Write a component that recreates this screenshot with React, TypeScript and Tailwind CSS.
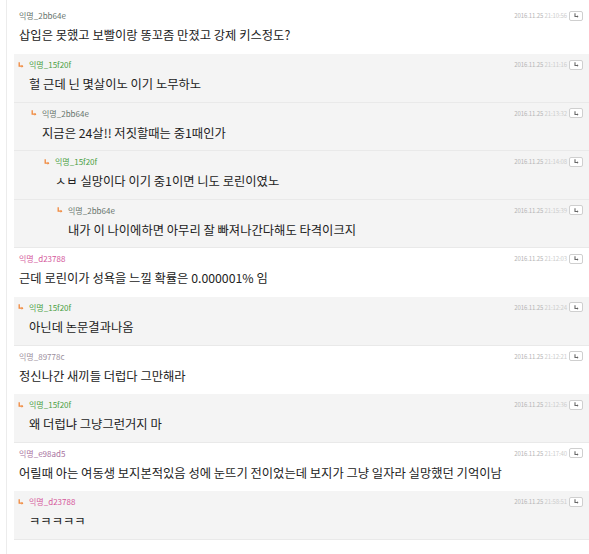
import React from 'react';

interface Comment {
  author: string;
  color: string;
  depth: number;
  text: string;
  date: string;
  time: string;
}

const comments: Comment[] = [
  { author: '익명_2bb64e', color: '#66736c', depth: 0, text: '삽입은 못했고 보빨이랑 똥꼬좀 만졌고 강제 키스정도?', date: '2016.11.25', time: '21:10:56' },
  { author: '익명_15f20f', color: '#4a9f43', depth: 1, text: '헐 근데 닌 몇살이노 이기 노무하노', date: '2016.11.25', time: '21:11:16' },
  { author: '익명_2bb64e', color: '#66736c', depth: 2, text: '지금은 24살!! 저짓할때는 중1때인가', date: '2016.11.25', time: '21:13:32' },
  { author: '익명_15f20f', color: '#4a9f43', depth: 3, text: 'ㅅㅂ 실망이다 이기 중1이면 니도 로린이였노', date: '2016.11.25', time: '21:14:08' },
  { author: '익명_2bb64e', color: '#66736c', depth: 4, text: '내가 이 나이에하면 아무리 잘 빠져나간다해도 타격이크지', date: '2016.11.25', time: '21:15:39' },
  { author: '익명_d23788', color: '#d4579b', depth: 0, text: '근데 로린이가 성욕을 느낄 확률은 0.000001% 임', date: '2016.11.25', time: '21:12:03' },
  { author: '익명_15f20f', color: '#4a9f43', depth: 1, text: '아닌데 논문결과나옴', date: '2016.11.25', time: '21:12:24' },
  { author: '익명_89778c', color: '#9c8f9d', depth: 0, text: '정신나간 새끼들 더럽다 그만해라', date: '2016.11.25', time: '21:12:21' },
  { author: '익명_15f20f', color: '#4a9f43', depth: 1, text: '왜 더럽냐 그냥그런거지 마', date: '2016.11.25', time: '21:12:36' },
  { author: '익명_e98ad5', color: '#a8719e', depth: 0, text: '어릴때 아는 여동생 보지본적있음 성에 눈뜨기 전이었는데 보지가 그냥 일자라 실망했던 기억이남', date: '2016.11.25', time: '21:17:40' },
  { author: '익명_d23788', color: '#d4579b', depth: 1, text: 'ㅋㅋㅋㅋㅋ', date: '2016.11.25', time: '21:58:51' },
];

const indent = ['pl-[12px]', 'pl-[4px]', 'pl-[17px]', 'pl-[30px]', 'pl-[43px]'];

function ReplyArrow({ color, size = 6 }: { color: string; size?: number }) {
  return (
    <svg width={size} height={size} viewBox="0 0 6 6" fill="none">
      <path d="M1.2 0.3V4.2H4.6" stroke={color} strokeWidth="1.3" />
      <path d="M3.6 2.7L5.4 4.2L3.6 5.7Z" fill={color} />
    </svg>
  );
}

function Row({ c, first }: { c: Comment; first: boolean }) {
  const reply = c.depth > 0;
  return (
    <div
      className={`${first ? 'h-[49px]' : 'h-[48.6px]'} ${indent[c.depth]} pr-[6px] pt-[5px] ${
        reply ? 'ml-[7px] bg-[#f4f4f4] border-b border-[#e9e9e9]' : 'bg-white'
      }`}
    >
      <div className="flex items-center h-[11px]">
        {reply && (
          <span className="w-[11px] flex items-center">
            <ReplyArrow color="#f0883c" />
          </span>
        )}
        <span className="text-[8px] leading-[11px]" style={{ color: c.color }}>
          {c.author}
        </span>
        <span className="ml-auto text-[6px] leading-[11px] tracking-[-0.1px]">
          <span className="text-[#b5b5b5]">{c.date}</span>{' '}
          <span className="text-[#cdcdcd]">{c.time}</span>
        </span>
        <span className="ml-[2px] w-[14px] h-[10px] border border-[#cfcfcf] rounded-[2px] bg-white flex items-center justify-center">
          <ReplyArrow color="#666" size={5} />
        </span>
      </div>
      <div
        className={`${reply ? 'ml-[11px]' : ''} mt-[5px] text-[12.3px] leading-[18px] text-[#222] whitespace-nowrap`}
      >
        {c.text}
      </div>
    </div>
  );
}

export default function App() {
  return (
    <div className="w-[589px] h-[554px] bg-white overflow-hidden font-['Noto_Sans_CJK_KR','Noto_Sans',sans-serif]">
      <div className="ml-[6px] h-full border-l border-[#ececec] pt-[5px]">
        {comments.map((c, i) => (
          <Row key={i} c={c} first={i === 0} />
        ))}
      </div>
    </div>
  );
}
